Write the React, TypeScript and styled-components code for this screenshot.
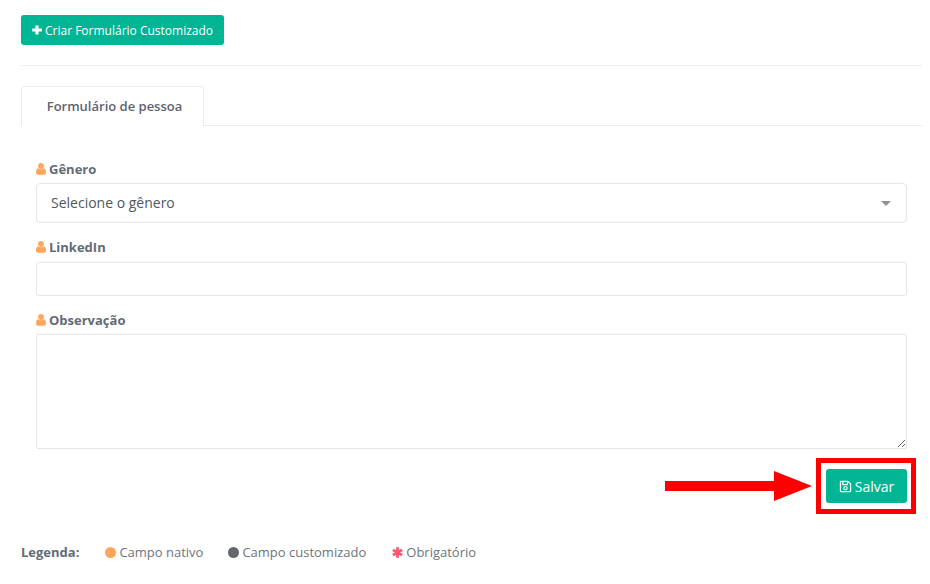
import React from "react";
import styled, { createGlobalStyle } from "styled-components";
import { FaRegSave } from "react-icons/fa";

const GlobalStyle = createGlobalStyle`
  html, body {
    margin: 0;
    padding: 0;
    background: #fff;
    font-family: "Open Sans", "Liberation Sans", sans-serif;
    color: #6c757d;
  }
  * { box-sizing: border-box; }
`;

const Page = styled.div`
  width: 930px;
  height: 584px;
  overflow: hidden;
  padding: 15px 8px 0 21px;
`;

const GreenButton = styled.button`
  display: inline-flex;
  align-items: center;
  justify-content: center;
  border: 0;
  border-radius: 3px;
  background: #00b594;
  color: #fff;
  font-family: inherit;
  padding: 0;
`;

const CreateButton = styled(GreenButton)`
  width: 203px;
  height: 30px;
  font-size: 12px;
  gap: 3px;
  svg { width: 10px; height: 10px; }
`;

const Divider = styled.div`
  height: 1px;
  background: #eeeeee;
  margin: 20px 0;
`;

const Tabs = styled.div`
  height: 40px;
  border-bottom: 1px solid #e9ecef;
  display: flex;
`;

const Tab = styled.div`
  width: 183px;
  height: 40px;
  border: 1px solid #e9ecef;
  border-bottom: 0;
  border-radius: 4px 4px 0 0;
  background: #fff;
  display: flex;
  align-items: center;
  justify-content: center;
  padding: 0 0 2px 4px;
  font-size: 13px;
  font-weight: 600;
  color: #5d6470;
`;

const Form = styled.div`
  padding: 35px 15px 0 15px;
  display: flex;
  flex-direction: column;
`;

const Label = styled.label`
  display: flex;
  align-items: center;
  gap: 3px;
  height: 16px;
  font-size: 13px;
  font-weight: 700;
  color: #636b75;
  svg { width: 10px; height: 12px; color: #ffa65c; }
`;

const Field = styled.div<{ $gap: number; $inner?: number }>`
  display: flex;
  flex-direction: column;
  gap: ${(p) => p.$inner ?? 6}px;
  margin-bottom: ${(p) => p.$gap}px;
`;

const Select = styled.div`
  height: 40px;
  border: 1px solid #e6e6e6;
  border-radius: 4px;
  padding: 0 15px 2px 14px;
  display: flex;
  align-items: center;
  justify-content: space-between;
  font-size: 14px;
  color: #4f5660;
`;

const Caret = styled.span`
  width: 0;
  height: 0;
  margin-top: 2px;
  border-left: 5px solid transparent;
  border-right: 5px solid transparent;
  border-top: 5px solid #919191;
`;

const Input = styled.input`
  height: 34px;
  border: 1px solid #e6e6e6;
  border-radius: 3px;
  outline: none;
`;

const TextArea = styled.textarea`
  display: block;
  width: 100%;
  height: 115px;
  border: 1px solid #e6e6e6;
  border-radius: 2px;
  outline: none;
`;

const Actions = styled.div`
  display: flex;
  justify-content: flex-end;
  align-items: center;
  margin-top: 9px;
  margin-right: -9px;
`;

const Arrow = styled.svg`
  width: 147px;
  height: 30px;
  margin-right: 4px;
  display: block;
`;

const Highlight = styled.div`
  width: 100px;
  height: 56px;
  border: 5px solid #ff0000;
  padding-left: 1px;
  display: flex;
  align-items: center;
  justify-content: center;
`;

const SaveButton = styled(GreenButton)`
  width: 81px;
  height: 34px;
  font-size: 14px;
  gap: 3px;
  svg { width: 13px; height: 13px; }
`;

const Legend = styled.div`
  display: flex;
  align-items: center;
  height: 18px;
  margin-top: 29px;
  font-size: 13px;
  color: #6c757d;
`;

const LegendTitle = styled.strong`
  font-weight: 700;
  color: #636b75;
  margin-right: 26px;
`;

const LegendItem = styled.span`
  display: inline-flex;
  align-items: center;
  gap: 3px;
  margin-right: 25px;
  svg { width: 11px; height: 11px; margin-left: 1px; color: #ff5473; }
`;

const Dot = styled.span<{ $color: string }>`
  width: 11px;
  height: 11px;
  border-radius: 50%;
  background: ${(p) => p.$color};
`;

const PlusIcon = () => (
  <svg viewBox="0 0 10 10">
    <path d="M3.4 0.4 H6.6 V3.4 H9.8 V6.6 H6.6 V9.6 H3.4 V6.6 H0.2 V3.4 H3.4 Z" fill="currentColor" />
  </svg>
);

const UserIcon = () => (
  <svg viewBox="0 0 10 12">
    <circle cx="5" cy="3" r="2.9" fill="currentColor" />
    <path d="M2 5.2 C3.5 6.6 6.5 6.6 8 5.2 C9.4 5.6 10 7.4 10 9.6 C10 11 9.2 11.8 8 11.8 H2 C0.8 11.8 0 11 0 9.6 C0 7.4 0.6 5.6 2 5.2 Z" fill="currentColor" />
  </svg>
);

const AsteriskIcon = () => (
  <svg viewBox="0 0 11 11">
    <path d="M5.5 0.2 V10.8 M0.9 2.85 L10.1 8.15 M10.1 2.85 L0.9 8.15" stroke="currentColor" strokeWidth="2.8" fill="none" />
  </svg>
);

export default function App() {
  return (
    <>
      <GlobalStyle />
      <Page>
        <CreateButton>
          <PlusIcon />
          Criar Formulário Customizado
        </CreateButton>
        <Divider />
        <Tabs>
          <Tab>Formulário de pessoa</Tab>
        </Tabs>
        <Form>
          <Field $gap={16}>
            <Label><UserIcon />Gênero</Label>
            <Select>
              Selecione o gênero
              <Caret />
            </Select>
          </Field>
          <Field $gap={16} $inner={7}>
            <Label><UserIcon />LinkedIn</Label>
            <Input />
          </Field>
          <Field $gap={0}>
            <Label><UserIcon />Observação</Label>
            <TextArea />
          </Field>
          <Actions>
            <Arrow viewBox="0 0 147 30">
              <path d="M0 10 H109 V0 L147 15 L109 30 V20 H0 Z" fill="#ff0000" />
            </Arrow>
            <Highlight>
              <SaveButton>
                <FaRegSave />
                Salvar
              </SaveButton>
            </Highlight>
          </Actions>
        </Form>
        <Legend>
          <LegendTitle>Legenda:</LegendTitle>
          <LegendItem><Dot $color="#ffa65c" />Campo nativo</LegendItem>
          <LegendItem><Dot $color="#63666b" />Campo customizado</LegendItem>
          <LegendItem><AsteriskIcon />Obrigatório</LegendItem>
        </Legend>
      </Page>
    </>
  );
}
